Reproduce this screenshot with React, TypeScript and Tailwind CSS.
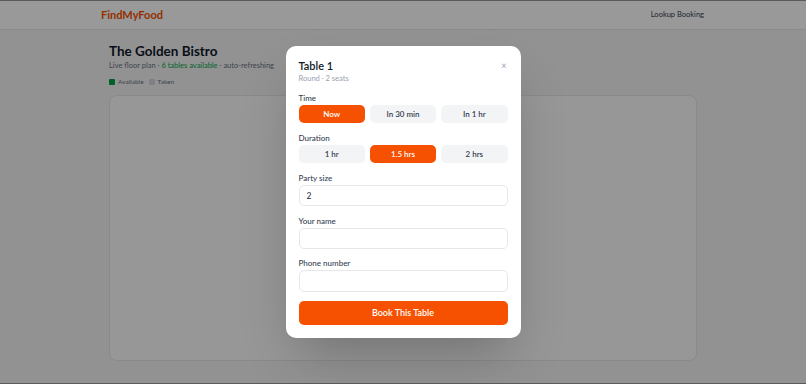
import React, { FC, useState } from "react";

const timeOptions = ["Now", "In 30 min", "In 1 hr"];
const durationOptions = ["1 hr", "1.5 hrs", "2 hrs"];

const OptionRow: FC<{ options: string[]; selected: string; onPick: (v: string) => void }> = ({
  options,
  selected,
  onPick,
}) => {
  return (
    <div className="mt-[2px] grid grid-cols-3 gap-[5px]">
      {options.map((opt) => (
        <button
          key={opt}
          onClick={() => onPick(opt)}
          className={`h-[18px] rounded-[5px] text-[8px] font-semibold leading-none ${
            selected === opt ? "bg-[#f65100] text-white" : "bg-gray-100 text-gray-700"
          }`}
        >
          {opt}
        </button>
      ))}
    </div>
  );
};

const Field: FC<{ label: string; value?: string; top: string; height: string }> = ({
  label,
  value = "",
  top,
  height,
}) => {
  return (
    <div className={top}>
      <label className="block text-[8px] leading-[10px] font-medium text-gray-700">{label}</label>
      <input
        defaultValue={value}
        className={`mt-[2px] block w-full ${height} rounded-[5px] border border-gray-200 bg-white px-[7px] text-[8.5px] text-gray-800 outline-none`}
      />
    </div>
  );
};

export default function App() {
  const [time, setTime] = useState("Now");
  const [duration, setDuration] = useState("1.5 hrs");

  return (
    <div className="relative h-[384px] overflow-hidden border-y border-[#5a5a5a] bg-gray-100 font-['Lato',sans-serif]">
      {/* NAV */}
      <header className="flex h-[29px] items-center justify-between border-b border-gray-200 bg-white px-[101px]">
        <span className="text-[11px] font-bold text-[#f65100]">FindMyFood</span>
        <span className="mr-[1px] text-[7.5px] text-gray-700">Lookup Booking</span>
      </header>

      {/* PAGE */}
      <main className="px-[109px] pt-[12px]">
        <h1 className="text-[13.5px] leading-[18px] font-bold text-gray-900">The Golden Bistro</h1>
        <p className="mt-[1px] text-[7.5px] leading-[10px] text-gray-500">
          Live floor plan · <span className="text-green-600">6 tables available</span> · auto-refreshing
        </p>
        <div className="mt-[7px] flex items-center gap-[3px] text-[6.5px] leading-[8px] text-gray-500">
          <span className="h-[6px] w-[6px] rounded-[1px] bg-green-600" />
          <span>Available</span>
          <span className="ml-[2px] h-[6px] w-[6px] rounded-[1px] bg-gray-300" />
          <span>Taken</span>
        </div>
        <div className="mt-[9px] h-[266px] rounded-[8px] border border-gray-200 bg-[#fcfcfc]" />
      </main>

      {/* MODAL */}
      <div className="absolute inset-0 flex items-center justify-center bg-black/40">
        <div className="w-[235px] rounded-[10px] bg-white p-[13px] shadow-2xl">
          <div className="flex items-start justify-between">
            <div>
              <h2 className="text-[11px] leading-[14px] font-semibold text-gray-900">Table 1</h2>
              <p className="mt-[1px] text-[7.5px] leading-[10px] text-gray-400">Round · 2 seats</p>
            </div>
            <button className="mr-[1px] mt-[2px] text-[9px] leading-none text-gray-400">×</button>
          </div>

          <div className="mt-[9px]">
            <label className="block text-[8px] leading-[10px] font-medium text-gray-700">Time</label>
            <OptionRow options={timeOptions} selected={time} onPick={setTime} />
          </div>

          <div className="mt-[10px]">
            <label className="block text-[8px] leading-[10px] font-medium text-gray-700">Duration</label>
            <OptionRow options={durationOptions} selected={duration} onPick={setDuration} />
          </div>

          <Field label="Party size" value="2" top="mt-[10px]" height="h-[21px]" />
          <Field label="Your name" top="mt-[10px]" height="h-[21px]" />
          <Field label="Phone number" top="mt-[9px]" height="h-[22px]" />

          <button className="mt-[9px] h-[24px] w-full rounded-[5px] bg-[#f65100] text-[9px] font-semibold text-white">
            Book This Table
          </button>
        </div>
      </div>
    </div>
  );
}
